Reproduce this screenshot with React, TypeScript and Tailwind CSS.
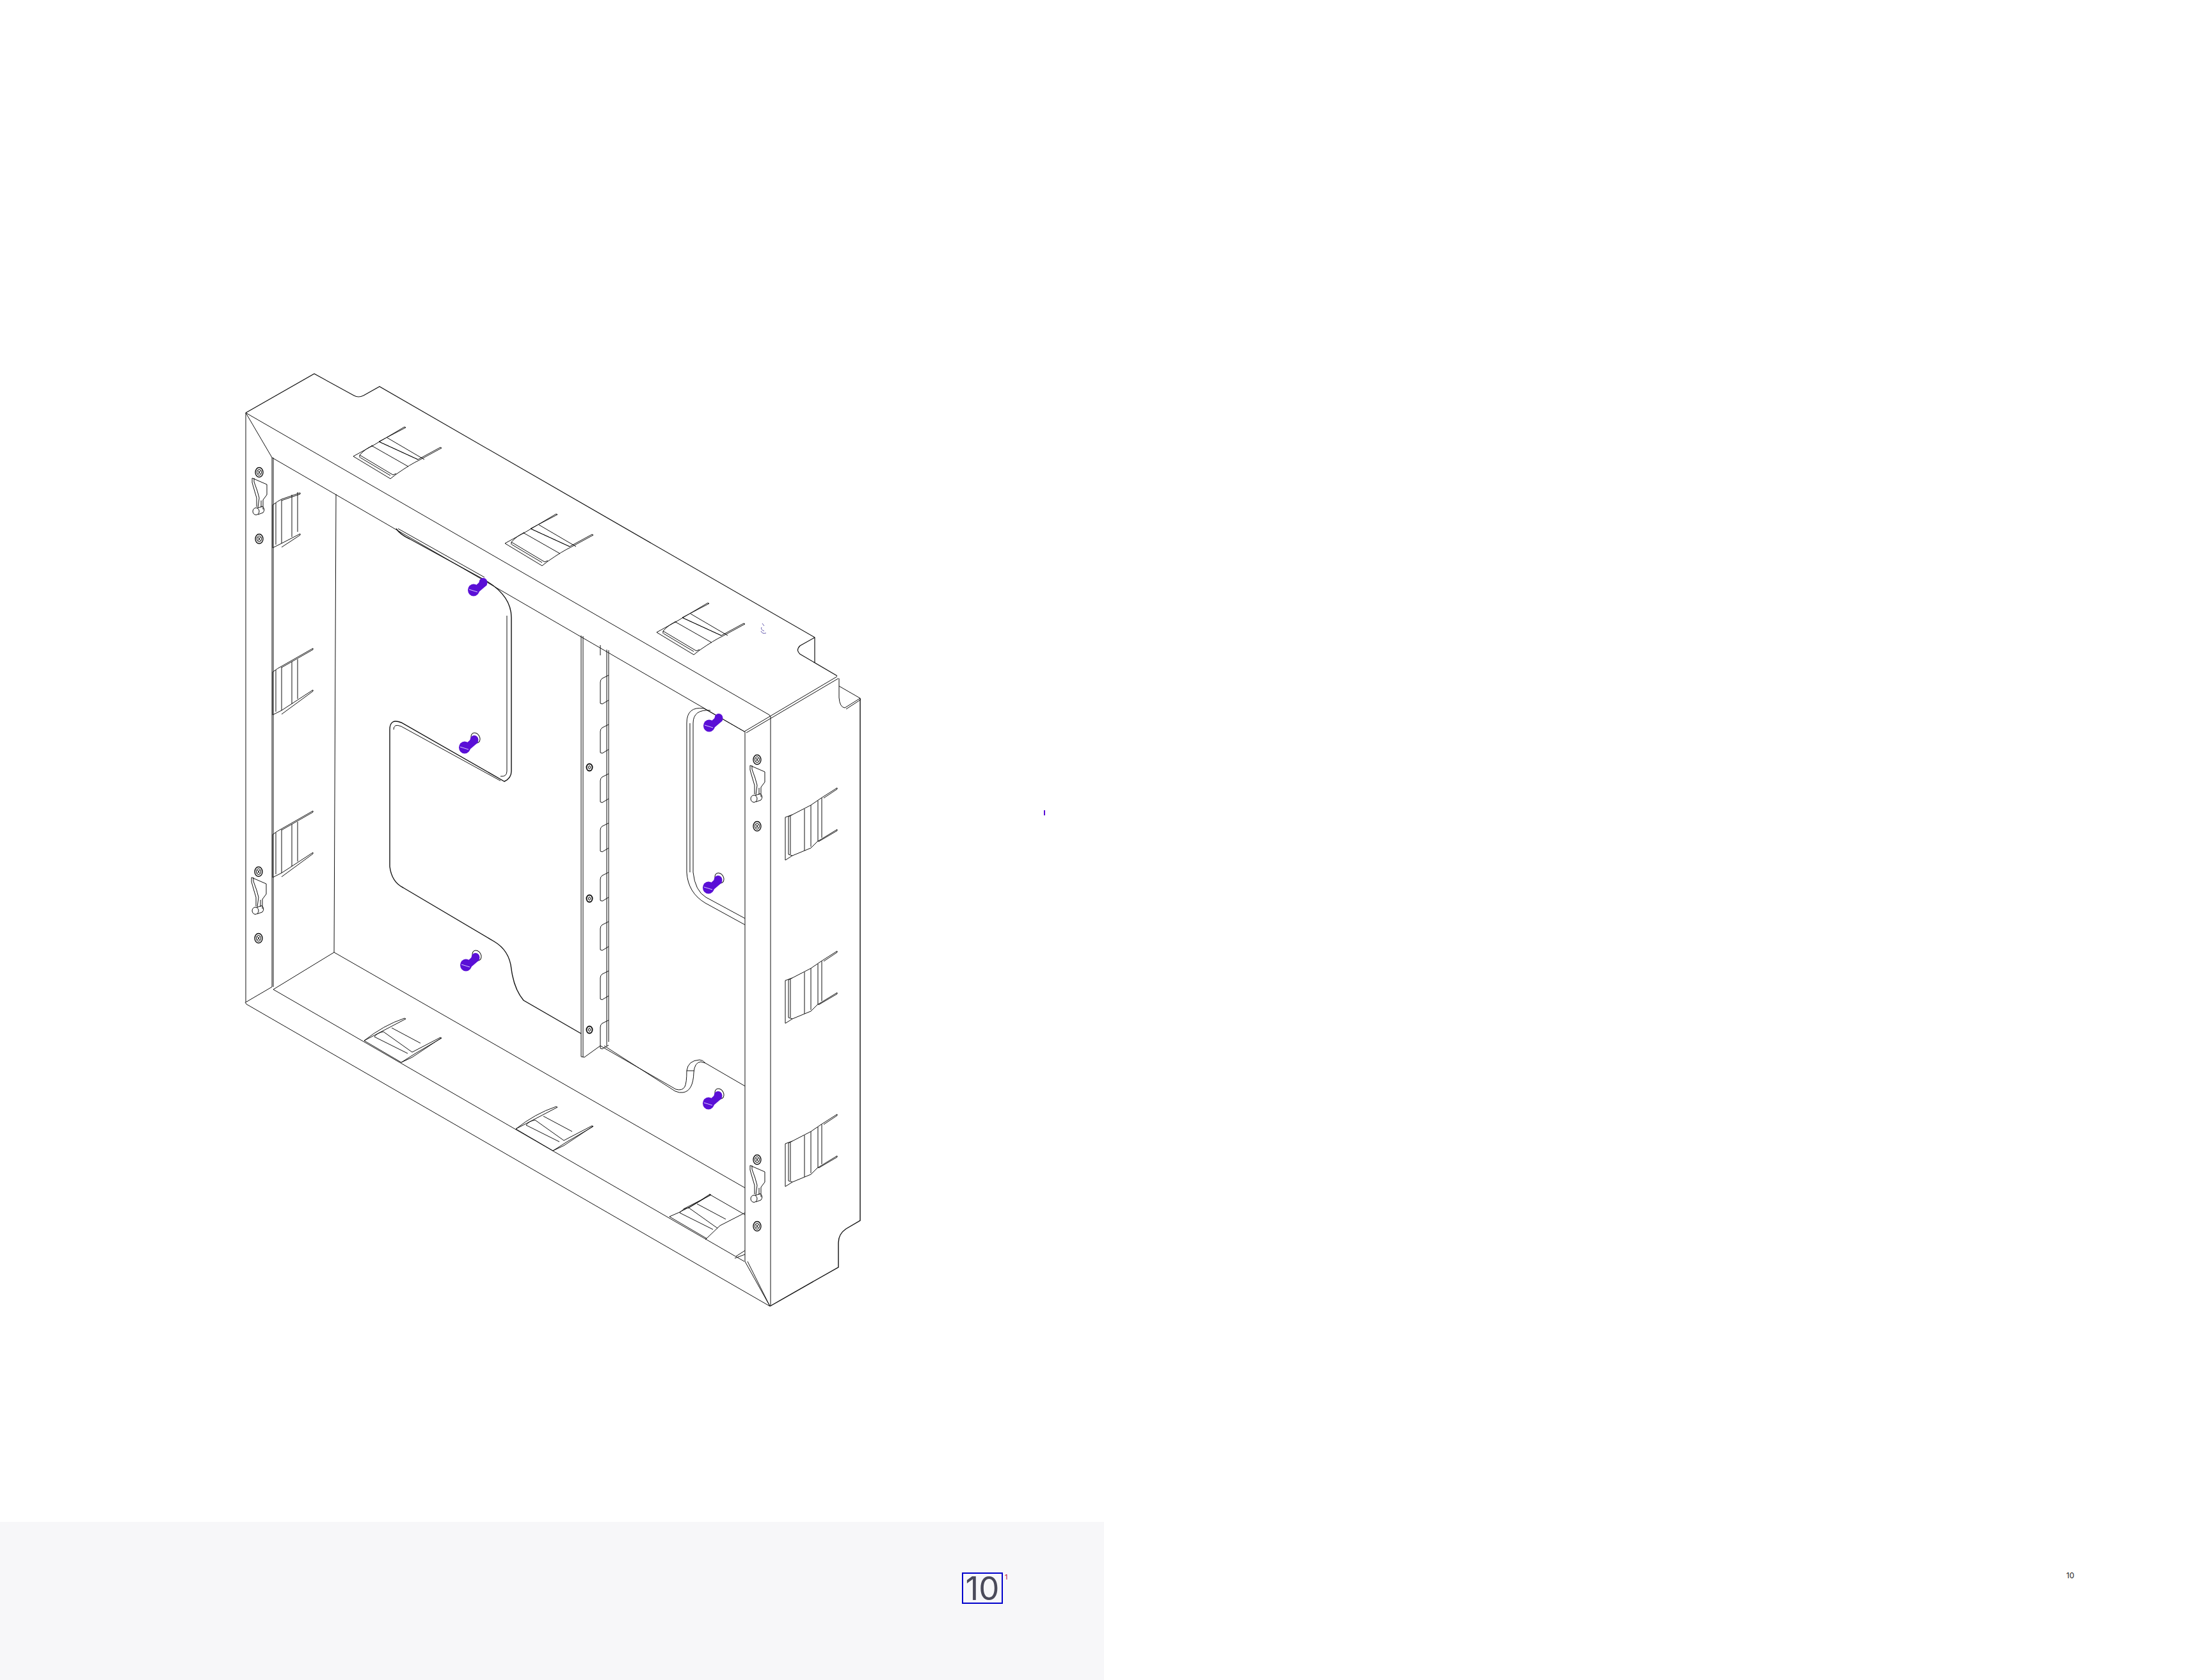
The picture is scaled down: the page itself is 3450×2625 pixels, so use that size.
const PIN = "#5a0fd6";

// roof and floor latches, drawn relative to the slot's left corner
function TopLatch({ x, y }: { x: number; y: number }) {
  return (
    <g transform={`translate(${x} ${y})`}>
      <path d="M0 0 L58 35 L67 28 Q90 12 103 6 L138 -13 L136 -14 L101 5 L40 -23 M0 0 L31 -17 L80 -46 L82 -45 L40 -23" />
      <path d="M10 -2 L62 29 L67 27 M11 2 L58 30 M10 -2 Q20 -13 31 -17 M10 -2 V2" />
      <path d="M28 -17 L86 16 M40 -23 L101 5 M53 -29 L111 5" />
    </g>
  );
}

function FloorLatch({ x, y, clip }: { x: number; y: number; clip?: boolean }) {
  return (
    <g transform={`translate(${x} ${y})`}>
      <path d={clip ? "M0 0 L58 34 M0 0 Q30 -12 63 -35 L65 -34 L22 -12" : "M0 0 L58 34 L75 26 L120 -4 M0 0 L65 -34 L63 -35 Q30 -24 0 0"} />
      {!clip && <path d="M58 34 L80 20 L121 -4 L119 -5 L75 18" />}
      <path d="M16 -6 L68 20 M30 -14 L75 18 M43 -20 L88 4 M16 -6 Q20 -12 30 -14" />
    </g>
  );
}

function LeftLatch({ y, rail, topEnd, lowEnd }: { y: number; rail: number; topEnd: number; lowEnd: number }) {
  return (
    <g transform={`translate(426 ${y})`}>
      <path d={`M0 0 Q8 -6 14 -9 L${rail} ${topEnd} V${topEnd + 2} L14 -7 M0 67 L14 60 L${rail} ${lowEnd} V${lowEnd + 2} L14 66 M0 0 V67`} />
      <path d="M5 -3 V62 M14 -8 V60 M30 -16 V50 M39 -20 V42" />
    </g>
  );
}

function RightLatch({ y }: { y: number }) {
  return (
    <g transform={`translate(1227 ${y})`}>
      <path d="M0 0 V67 L11 60 L40 48 L50 38 L81 19 V21 L52 38 M0 0 L11 -4 L40 -19 L56 -30 L81 -46 V-44 L60 -30" />
      <path d="M5 -1 V58 L11 60 M8 -2 V58 M5 -1 L11 -4 M30 -13 V52 M40 -19 V46 M51 -26 V38 M57 -30 V32" />
    </g>
  );
}

function Clip({ x, y }: { x: number; y: number }) {
  return (
    <g transform={`translate(${x} ${y})`}>
      <ellipse cx="0" cy="0" rx="6" ry="7.5" strokeWidth="1.4" />
      <ellipse cx="0" cy="0" rx="3.5" ry="4.5" />
      <path d="M-2 -3 L2 3 M2 -3 L-2 3" />
      <path d="M-11 9 L12 19 V35 L6 43 V58 M-11 9 V16 L-7 30 L-4 40 V54 M-8 9 V15 L-3 29 L0 40 L-2 55 M3 44 V55" />
      <ellipse cx="-5" cy="61" rx="5" ry="5.5" />
      <path d="M-3 56 L5 53 Q10 58 6 63 L-2 66" />
      <ellipse cx="0" cy="104" rx="6" ry="7.5" strokeWidth="1.4" />
      <ellipse cx="0" cy="104" rx="3.5" ry="4.5" />
      <path d="M-2 101 L2 107 M2 101 L-2 107" />
    </g>
  );
}

function Pin({ x, y, ring }: { x: number; y: number; ring?: boolean }) {
  return (
    <g transform={`translate(${x} ${y})`}>
      {ring && <ellipse cx="17" cy="-15" rx="6.5" ry="8.5" transform="rotate(-30 17 -15)" />}
      <ellipse cx="0" cy="0" rx="9" ry="9.5" fill={PIN} stroke="none" />
      <path d="M1 -5 L14 -17 L21 -8 L7 4 Z" fill={PIN} stroke="none" />
      <ellipse cx="15" cy="-12" rx="6.5" ry="7" fill={PIN} stroke="none" />
      <path d="M-7 -1 L6 3" stroke="#d9ccff" />
    </g>
  );
}

function RailTab({ y }: { y: number }) {
  return <path d={`M951 ${y} L941 ${y + 5} Q938 ${y + 7} 938 ${y + 11} V${y + 44} L941 ${y + 45} L951 ${y + 39}`} />;
}

function Drawing() {
  return (
    <svg viewBox="0 0 1725 2378" className="h-[2378px] w-[1725px] fill-none stroke-[#111]" strokeWidth="1">
      {/* roof */}
      <path d="M384 645 L491 584 L553 618 Q560 622 568 618 L593 604 L1273 996 V1035 M1273 996 L1250 1009 Q1243 1016 1250 1022 L1308 1056" strokeWidth="1.2" />
      <path d="M384 645 L1202 1117 M425 715 L1163 1143 M1163 1143 L1308 1057 M1166 1145 L1310 1060" />
      <path d="M384 645 L425 715 M1202 1117 L1204 1120" />

      {/* outer frame and side wall */}
      <path d="M384 645 V1566 L425 1542 M425 715 V1542 M427 715 V1542" />
      <path d="M525 772 L522 1488 L427 1546 M522 1488 L1164 1856 M427 1546 L1163 1971 M385 1569 L1203 2041 M383 1566 L385 1569" />
      <path d="M1164 1143 V1971 L1203 2041 L1168 1971 M1204 1120 V2041" />
      <path d="M1311 1060 V1090 Q1312 1105 1320 1106 L1344 1091 L1311 1072 M1322 1108 L1345 1093" />
      <path d="M1344 1091 V1907 L1322 1920 Q1310 1928 1310 1942 V1980 L1203 2041" strokeWidth="1.4" />

      {/* back panel cut-outs */}
      <path d="M619 826 Q625 835 640 842 L757 906 Q799 930 799 965 V1205 Q799 1216 788 1221 L627 1129 Q609 1122 609 1140 V1354 Q612 1378 630 1387 L772 1471 Q796 1485 799 1514 Q803 1545 818 1563 L908 1615" strokeWidth="1.4" />
      <path d="M622 826 L757 902 M792 962 V1205 Q792 1214 782 1213 M615 1140 Q615 1130 627 1135 L782 1220" />
      <path d="M1100 1107 Q1073 1103 1073 1130 V1363 Q1075 1395 1102 1411 L1164 1445 M1110 1110 Q1083 1108 1083 1130 V1363 Q1086 1392 1103 1402 L1164 1435 M1078 1130 V1363 M1100 1107 L1163 1143" />
      <path d="M938 1634 L1056 1702 Q1066 1705 1070 1698 Q1073 1692 1073 1673 Q1075 1657 1093 1656 Q1098 1656 1102 1661 L1164 1697 M944 1634 L1055 1705 Q1062 1708 1067 1707 Q1083 1705 1084 1676 Q1085 1660 1095 1659 L1102 1661 M1073 1673 H1084" />

      {/* centre rail */}
      <path d="M908 993 V1651 L913 1652 L938 1634 M911 994 V1651 M948 1015 V1634 M951 1016 V1628 M938 1008 V1024" />
      {[1055, 1132, 1209, 1286, 1363, 1440, 1517, 1594].map((y) => (
        <RailTab key={y} y={y} />
      ))}
      {[1199, 1404, 1609].map((y) => (
        <g key={y}>
          <ellipse cx="921" cy={y} rx="4.5" ry="5.5" strokeWidth="2" />
          <ellipse cx="921" cy={y} rx="1.5" ry="2.5" />
        </g>
      ))}

      {/* latches */}
      <TopLatch x={552} y={713} />
      <TopLatch x={789} y={849} />
      <TopLatch x={1026} y={988} />
      <FloorLatch x={569} y={1626} />
      <FloorLatch x={806} y={1764} />
      <FloorLatch x={1046} y={1901} clip />
      <path d="M1108 1866 L1110 1867 L1164 1898 M1110 1867 L1075 1888 M1102 1937 L1125 1915 L1164 1895" />
      <path d="M1150 1963 L1164 1954 M1148 1966 L1164 1960" />
      <LeftLatch y={789} rail={43} topEnd={-19} lowEnd={45} />
      <LeftLatch y={1050} rail={63} topEnd={-37} lowEnd={28} />
      <LeftLatch y={1304} rail={63} topEnd={-37} lowEnd={28} />
      <RightLatch y={1277} />
      <RightLatch y={1532} />
      <RightLatch y={1787} />

      {/* clips and screws */}
      <Clip x={405} y={738} />
      <Clip x={404} y={1362} />
      <Clip x={1183} y={1187} />
      <Clip x={1183} y={1812} />

      {/* pins */}
      <Pin x={740} y={922} />
      <Pin x={726} y={1168} ring />
      <Pin x={1108} y={1134} />
      <Pin x={1107} y={1387} ring />
      <Pin x={728} y={1508} ring />
      <Pin x={1107} y={1724} ring />

      {/* stray marks */}
      <path d="M1191 974 L1194 978 M1190 980 Q1188 984 1194 986 M1189 986 Q1191 991 1197 989" stroke="#6a5fb0" />
      <path d="M1632 1266 V1274" stroke={PIN} strokeWidth="2" />
    </svg>
  );
}

export default function App() {
  return (
    <div className="flex h-[2625px] w-[3450px] bg-white font-['Inter',sans-serif]">
      <div className="flex w-[1725px] flex-col">
        <Drawing />
        <div className="flex h-[247px] items-start bg-[#f7f7f9] pl-[1503px] pt-[79px]">
          <div className="flex h-[49px] w-[64px] items-center justify-center border-2 border-[#0000cc] text-[51px] leading-none text-[#4a4a5a]">
            10
          </div>
          <span className="ml-[3px] mt-[-1px] text-[11px] leading-[16px] text-[#b0103a]">1</span>
        </div>
      </div>
      <div className="flex flex-1 items-end justify-end pb-[157px] pr-[209px]">
        <span className="text-[12px] leading-none text-[#222]">10</span>
      </div>
    </div>
  );
}
